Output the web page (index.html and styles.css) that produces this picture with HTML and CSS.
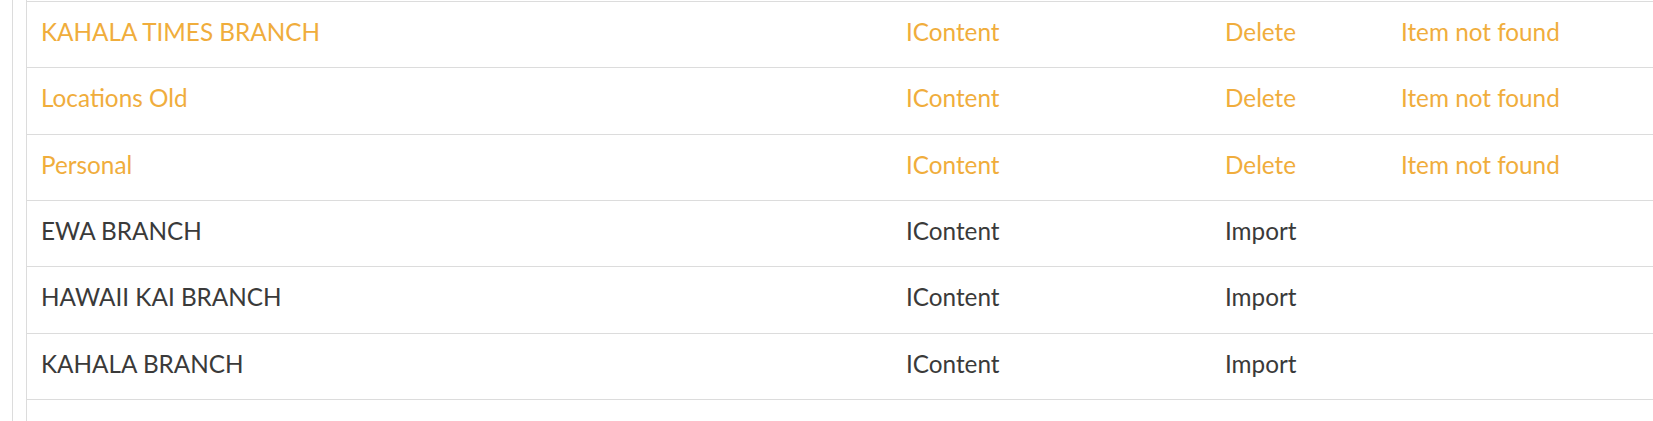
FILE: index.html
```html
<!DOCTYPE html>
<html>
<head>
<meta charset="utf-8">
<link rel="stylesheet" href="styles.css">
</head>
<body>
<div class="outer">
  <div class="list">
    <div class="row warn"><div class="c name">KAHALA TIMES BRANCH</div><div class="c type">IContent</div><div class="c act">Delete</div><div class="c msg">Item not found</div></div>
    <div class="row warn"><div class="c name">Locations Old</div><div class="c type">IContent</div><div class="c act">Delete</div><div class="c msg">Item not found</div></div>
    <div class="row warn"><div class="c name">Personal</div><div class="c type">IContent</div><div class="c act">Delete</div><div class="c msg">Item not found</div></div>
    <div class="row"><div class="c name">EWA BRANCH</div><div class="c type">IContent</div><div class="c act">Import</div><div class="c msg"></div></div>
    <div class="row"><div class="c name">HAWAII KAI BRANCH</div><div class="c type">IContent</div><div class="c act">Import</div><div class="c msg"></div></div>
    <div class="row"><div class="c name">KAHALA BRANCH</div><div class="c type">IContent</div><div class="c act">Import</div><div class="c msg"></div></div>
    <div class="row filler"></div>
  </div>
</div>
</body>
</html>
```
FILE: styles.css
```css
html, body {
  margin: 0;
  padding: 0;
  background: #fff;
  height: 100%;
  overflow: hidden;
}
body {
  font-family: Lato, "Open Sans", sans-serif;
  font-size: 24.3px;
  color: #3a3a3a;
}
.outer {
  margin-left: 12px;
  border-left: 1px solid #dcdcdc;
  padding-left: 13px;
  height: 100%;
}
.list {
  border-left: 1px solid #dcdcdc;
  padding-top: 1px;
  height: 100%;
  box-sizing: border-box;
  display: flex;
  flex-direction: column;
  overflow: hidden;
}
.row {
  display: grid;
  grid-template-columns: 865px 319px 176px 1fr;
  height: 65.33px;
  flex: none;
  border-top: 1px solid #dcdcdc;
  box-sizing: content-box;
}
.row.filler {
  flex: 1 1 0;
  height: auto;
}
.c {
  padding: 15px 0 0 14px;
  line-height: 29px;
  white-space: nowrap;
}
.warn {
  color: #f0ad3c;
}
```
